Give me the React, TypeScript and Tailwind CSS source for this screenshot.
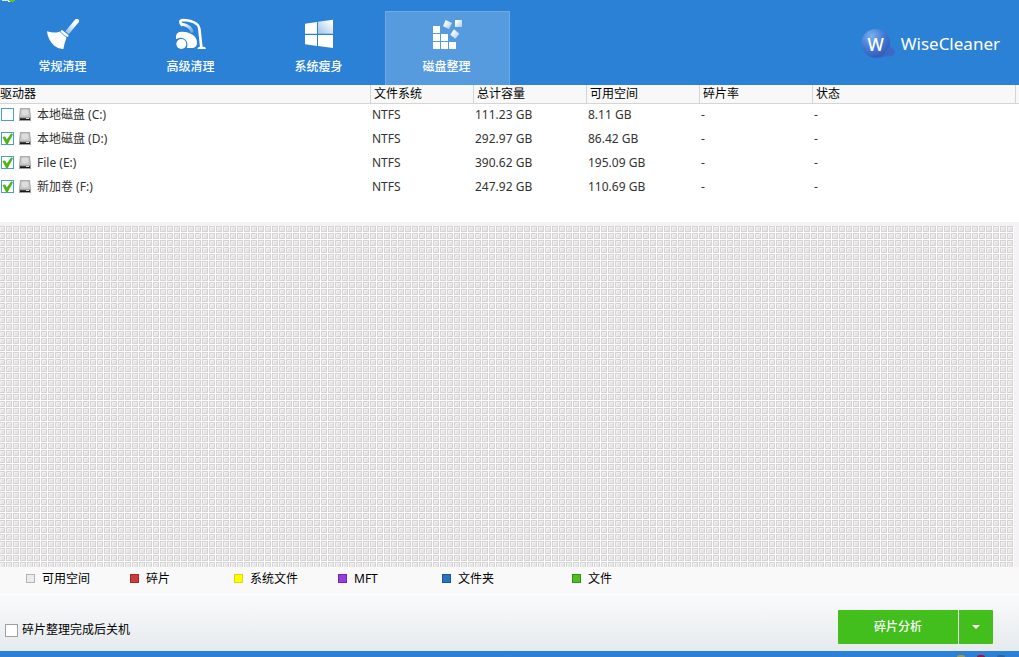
import { ReactNode } from 'react';

interface Drive {
    name: string;
    fileSystem: string;
    total: string;
    free: string;
    checked: boolean;
}

const drives: Drive[] = [
    {
        name: '本地磁盘 (C:)',
        fileSystem: 'NTFS',
        total: '111.23 GB',
        free: '8.11 GB',
        checked: false,
    },
    {
        name: '本地磁盘 (D:)',
        fileSystem: 'NTFS',
        total: '292.97 GB',
        free: '86.42 GB',
        checked: true,
    },
    {
        name: 'File (E:)',
        fileSystem: 'NTFS',
        total: '390.62 GB',
        free: '195.09 GB',
        checked: true,
    },
    {
        name: '新加卷 (F:)',
        fileSystem: 'NTFS',
        total: '247.92 GB',
        free: '110.69 GB',
        checked: true,
    },
];

const columns = [
    { title: '驱动器', className: 'w-[371px]' },
    { title: '文件系统', className: 'w-[103px] pl-[3px]' },
    { title: '总计容量', className: 'w-[113px] pl-[3px]' },
    { title: '可用空间', className: 'w-[113px] pl-[3px]' },
    { title: '碎片率', className: 'w-[113px] pl-[3px]' },
    { title: '状态', className: 'pl-[3px]' },
];

const legend = [
    { label: '可用空间', width: 'w-[104px]', color: 'border-[#b4b4b4] bg-[#ececec]' },
    { label: '碎片', width: 'w-[104px]', color: 'border-[#b02424] bg-[#c83c3c]' },
    { label: '系统文件', width: 'w-[104px]', color: 'border-[#e0d800] bg-[#ffff00]' },
    { label: 'MFT', width: 'w-[104px]', color: 'border-[#7a22c0] bg-[#9440d8]' },
    { label: '文件夹', width: 'w-[130px]', color: 'border-[#1759a0] bg-[#2f72bc]' },
    { label: '文件', width: 'w-[104px]', color: 'border-[#259a0c] bg-[#54bc20]' },
];

function BroomIcon() {
    return (
        <svg className="size-8" viewBox="141 54 96 96">
            <defs>
                <linearGradient id="handle" x1="1" y1="0" x2="0" y2="1">
                    <stop offset="0.35" stopColor="#fff" />
                    <stop offset="1" stopColor="#fff" stopOpacity="0.4" />
                </linearGradient>
            </defs>
            <path
                d="M226 58q5-4 9 0t1 9L206 103l-10-9z"
                fill="url(#handle)"
            />
            <path
                d="M186 94l16 13"
                stroke="#fff"
                strokeWidth="7"
                strokeLinecap="round"
            />
            <path
                d="M141 94q22 7 37 1q5-1 9 3l9 8q4 4 3 9q-5 12-9 32q-14 1-27-10q-20-17-22-43z"
                fill="#fff"
            />
            <path
                d="M180 95l19 17"
                stroke="#2b81d5"
                strokeWidth="2"
            />
        </svg>
    );
}

function VacuumIcon() {
    return (
        <svg className="size-8" viewBox="525 54 96 96">
            <defs>
                <linearGradient id="hose" x1="0" y1="0" x2="1" y2="1">
                    <stop offset="0.1" stopColor="#fff" />
                    <stop offset="1" stopColor="#fff" stopOpacity="0.25" />
                </linearGradient>
            </defs>
            <path
                d="M544 72Q572 76 577 98"
                fill="none"
                stroke="url(#hose)"
                strokeWidth="9"
            />
            <path
                d="M547 77Q535 63 547 60Q574 60 590 72Q597 77 598 86L604 142"
                fill="none"
                stroke="#fff"
                strokeWidth="8"
                strokeLinejoin="round"
            />
            <path d="M592 147q2-7 8-7h11q6 0 7 7z" fill="#fff" />
            <path
                d="M528 118Q525 96 544 95Q563 94 579 105Q592 115 591 130Q590 143 578 144L560 144Q566 130 557 120Q545 108 528 118z"
                fill="#fff"
            />
            <circle cx="544" cy="132" r="15" fill="#fff" />
        </svg>
    );
}

function WindowsIcon() {
    return (
        <svg className="size-8" viewBox="129 54 96 96">
            <defs>
                <linearGradient id="pane" x1="0" y1="1" x2="1" y2="0">
                    <stop offset="0.1" stopColor="#a9cbef" />
                    <stop offset="0.9" stopColor="#fff" />
                </linearGradient>
            </defs>
            <path d="M135 71l36-5v35h-36z" fill="#fff" />
            <path d="M174 65l45-6v42h-45z" fill="url(#pane)" />
            <path d="M135 105h36v33l-36-5zM174 105h45v39l-45-6z" fill="#fff" />
        </svg>
    );
}

function DefragIcon() {
    return (
        <svg className="size-8" viewBox="513 54 96 96">
            <defs>
                <linearGradient id="block" x1="0" y1="0" x2="1" y2="1">
                    <stop offset="0.2" stopColor="#fff" />
                    <stop offset="1" stopColor="#a6c8ee" />
                </linearGradient>
            </defs>
            <path
                d="M519 78h21v21h-21zM519 102h21v21h-21zM519 126h21v21h-21zM543 102h21v21h-21zM543 126h21v21h-21zM567 126h21v21h-21z"
                fill="#fff"
            />
            <path d="M585 60h21v21h-21z" fill="url(#block)" />
            <path d="M557 60l19 9l-9 18l-18-8z" fill="url(#block)" />
            <path d="M582 88l16 13l-12 15l-15-12z" fill="url(#block)" />
        </svg>
    );
}

function Logo() {
    return (
        <svg className="h-8 w-[34px]" viewBox="66 54 102 96">
            <defs>
                <radialGradient id="ball" cx="0.35" cy="0.25" r="0.8">
                    <stop offset="0" stopColor="#78b2ec" />
                    <stop offset="0.55" stopColor="#4479d4" />
                    <stop offset="1" stopColor="#3058b8" />
                </radialGradient>
            </defs>
            <circle cx="110" cy="100" r="43" fill="url(#ball)" />
            <path
                d="M122 143q14-5 19-20q5-9 13-17q-2 8 6 9q8 4 8 12q-1 10-12 12q-10-1-17 0q-8 4-17 4z"
                fill="#3d68c6"
            />
            <text
                x="110"
                y="122"
                textAnchor="middle"
                fontFamily="Noto Sans, sans-serif"
                fontSize="52"
                fontWeight="500"
                fill="#fff"
            >
                W
            </text>
        </svg>
    );
}

function DriveIcon() {
    return (
        <svg className="h-[13px] w-3 shrink-0" viewBox="0 0 12 13">
            <path d="M1 0h10l1 9H0z" fill="#aaa" />
            <path d="M2 1h8l1 8H1z" fill="#c6c6c6" />
            <ellipse cx="6" cy="4.5" rx="3.6" ry="3" fill="#dcdcdc" />
            <path d="M0 9h12v4H0z" fill="#a0a0a0" />
            <path d="M1 10h10v1H1z" fill="#444" />
            <path d="M1 11h10v1H1z" fill="#181818" />
            <path d="M7 10h3v1H7z" fill="#d8d8d8" />
        </svg>
    );
}

function Checkbox({
    id,
    checked = false,
    border,
}: {
    id: string;
    checked?: boolean;
    border: string;
}) {
    return (
        <span className="relative size-[13px] shrink-0">
            <input
                id={id}
                type="checkbox"
                defaultChecked={checked}
                className={`peer block size-[13px] appearance-none border bg-white ${border}`}
            />
            <svg
                className="pointer-events-none absolute inset-0 hidden size-[13px] peer-checked:block"
                viewBox="0 0 13 13"
            >
                <path
                    d="M1.5 5l2.6-.6L5.8 7.6L10.3 1.2l1.7 1L6.8 12H5z"
                    fill="#4cb414"
                />
            </svg>
        </span>
    );
}

const tabs: { label: string; icon: ReactNode }[] = [
    { label: '常规清理', icon: <BroomIcon /> },
    { label: '高级清理', icon: <VacuumIcon /> },
    { label: '系统瘦身', icon: <WindowsIcon /> },
    { label: '磁盘整理', icon: <DefragIcon /> },
];

export default function App() {
    const activeTab = '磁盘整理';

    return (
        <div className="flex min-h-screen flex-col overflow-hidden bg-white font-['Noto_Sans','Noto_Sans_CJK_SC',sans-serif] text-xs leading-4 text-black">
            <header className="relative flex h-[85px] items-end justify-between bg-[#2b81d5] pr-[19px] pl-px">
                <svg
                    className="absolute top-0 left-0 h-[3px] w-4"
                    viewBox="0 0 16 3"
                >
                    <path d="M2 0h7v1H2z" fill="#d9e6d2" />
                    <path d="M9 0h6v1l-2 1h-3z" fill="#5fbd3c" />
                    <path d="M8 1h2v1H8z" fill="#eef3c8" />
                </svg>

                <nav className="flex gap-[3px]">
                    {tabs.map((tab) => (
                        <button
                            key={tab.label}
                            className={`flex h-[74px] w-[125px] flex-col items-center gap-[9px] border border-b-0 pt-1.5 pr-0.5 font-medium text-white ${
                                tab.label === activeTab
                                    ? 'border-[#70aae6] bg-[#579bdf]'
                                    : 'border-transparent'
                            }`}
                        >
                            {tab.icon}
                            {tab.label}
                        </button>
                    ))}
                </nav>

                <div className="flex items-center gap-1.5 self-center pt-0.5 text-[17px] leading-6 text-white">
                    <Logo />
                    WiseCleaner
                </div>
            </header>

            <section className="h-[137px]">
                <table className="w-full table-fixed border-separate border-spacing-0 text-left">
                    <thead>
                        <tr className="h-[19px] bg-[#f8f8f8]">
                            {columns.map((column) => (
                                <th
                                    key={column.title}
                                    className={`border-r border-b border-[#d5d5d5] font-normal ${column.className}`}
                                >
                                    {column.title}
                                </th>
                            ))}
                            <td className="w-[3px] border-b border-[#d5d5d5]" />
                        </tr>
                    </thead>
                    <tbody className="text-[#333]">
                        {drives.map((drive, index) => (
                            <tr key={drive.name} className="h-6">
                                <td className="pb-[3px] pl-px">
                                    <div className="flex items-center">
                                        <Checkbox
                                            id={`drive-${index}`}
                                            checked={drive.checked}
                                            border="border-[#4b9fd0]"
                                        />
                                        <label
                                            htmlFor={`drive-${index}`}
                                            className="flex items-center gap-1.5 pl-[5px]"
                                        >
                                            <DriveIcon />
                                            {drive.name}
                                        </label>
                                    </div>
                                </td>
                                <td className="pb-[3px] pl-px">{drive.fileSystem}</td>
                                <td className="pb-[3px] pl-px">{drive.total}</td>
                                <td className="pb-[3px] pl-px">{drive.free}</td>
                                <td className="pb-[3px] pl-px">-</td>
                                <td className="pb-[3px] pl-px">-</td>
                                <td />
                            </tr>
                        ))}
                    </tbody>
                </table>
            </section>

            {/* Cluster map */}
            <section className="flex flex-1 bg-[#f5f2f6] pt-1 pr-[5px]">
                <svg className="min-h-[341px] w-full flex-1">
                    <defs>
                        <pattern
                            id="cluster"
                            x="-1"
                            width="7"
                            height="7"
                            patternUnits="userSpaceOnUse"
                        >
                            <rect width="7" height="7" fill="#fff" />
                            <rect width="6" height="6" fill="#d5d4d5" />
                            <rect x="1" y="1" width="4" height="4" fill="#f3f0f2" />
                            <rect x="2" y="2" width="3" height="3" fill="#e8e4e6" />
                        </pattern>
                    </defs>
                    <rect width="100%" height="100%" fill="url(#cluster)" />
                </svg>
            </section>

            <ul className="flex h-[27px] items-center bg-[#f9f9f9] pb-1 pl-[26px]">
                {legend.map((item) => (
                    <li
                        key={item.label}
                        className={`flex items-center gap-[7px] ${item.width}`}
                    >
                        <span className={`size-[9px] border ${item.color}`} />
                        {item.label}
                    </li>
                ))}
            </ul>

            <footer className="flex h-[57px] items-start justify-between border-t border-white bg-linear-to-b from-[#fafbfc] to-[#e6eaed] pt-[15px] pr-[26px] pl-[5px]">
                <div className="flex items-center gap-1 pt-3">
                    <Checkbox id="shutdown" border="border-[#a0a0a0]" />
                    <label htmlFor="shutdown">碎片整理完成后关机</label>
                </div>

                <div className="flex h-[34px] gap-px font-medium text-white">
                    <button className="w-[120px] rounded-l-[1px] bg-[#43bf1d]">
                        碎片分析
                    </button>
                    <button
                        aria-label="更多"
                        className="flex w-[34px] items-center justify-center rounded-r-[1px] bg-[#43bf1d]"
                    >
                        <svg className="h-1 w-2" viewBox="0 0 8 4">
                            <path d="M0 0h8L4 4z" fill="#fff" />
                        </svg>
                    </button>
                </div>
            </footer>

            <div className="flex h-1.5 items-end justify-end bg-[#2b81d5] pr-3.5">
                <svg className="h-0.5 w-12" viewBox="0 0 48 2">
                    <path d="M0 2q0-2 3-2h2q3 0 3 2z" fill="#a89a3c" />
                    <path d="M20 2q0-2 3-2h2q3 0 3 2z" fill="#b01030" />
                    <path d="M40 2q0-2 3-2h2q3 0 3 2z" fill="#2f64a0" />
                </svg>
            </div>
        </div>
    );
}
